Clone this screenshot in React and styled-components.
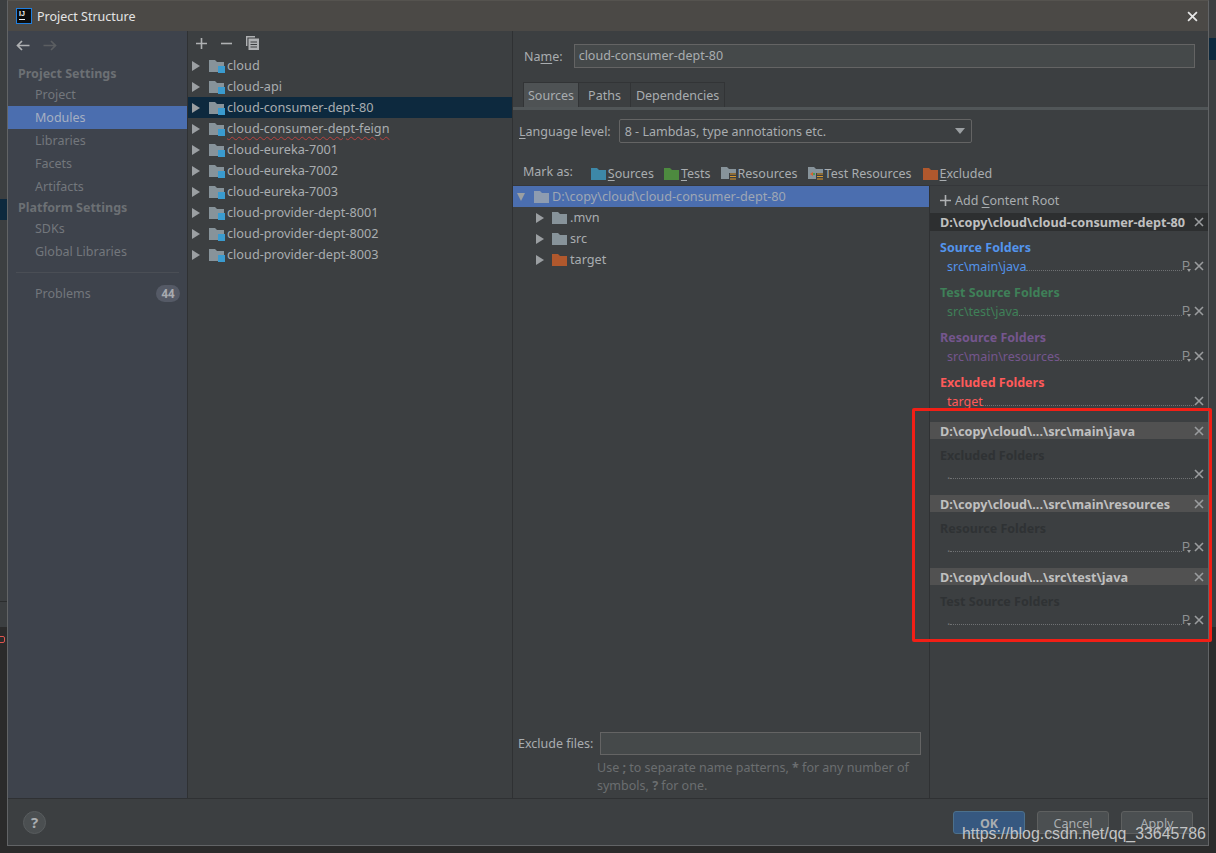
import React from "react";
import styled, { createGlobalStyle } from "styled-components";

const Global = createGlobalStyle`
  html, body { margin: 0; padding: 0; background: #2b2b2b; }
  body { width: 1216px; height: 853px; overflow: hidden; font-family: "Noto Sans", "Open Sans", sans-serif; font-size: 13px; color: #a9adb0; }
  u { text-underline-offset: 2px; text-decoration-thickness: 1px; }
`;

const Page = styled.div`
  position: relative;
  width: 1216px;
  height: 853px;
  display: grid;
  grid-template-columns: 7px 1202px 7px;
  background: #2b2b2b;
`;
const LeftStrip = styled.div`
  position: relative;
  height: 853px;
  background: linear-gradient(#3c3f41 0 199px, #0d293e 199px 220px, #3c3f41 220px 601px, #2b2d2e 601px 602px, #3c3f41 602px 627px, #2b2b2b 627px);
`;
const RedGlyph = styled.div`
  position: absolute;
  left: -3px;
  top: 636px;
  width: 6px;
  height: 5px;
  border: 1px solid #e0554e;
  border-radius: 2px;
`;
const RightStrip = styled.div`
  height: 853px;
  background: linear-gradient(#3c3f41 0 38px, #0d293e 38px 60px, #3c3f41 60px 627px, #2b2b2b 627px);
`;
const Dialog = styled.div`
  box-sizing: border-box;
  height: 846px;
  display: flex;
  flex-direction: column;
  border: 1px solid #626466;
  border-top: 1px solid #55534f;
  background: #3c3f41;
`;
const TitleBar = styled.div`
  height: 30px;
  flex: none;
  box-sizing: border-box;
  display: flex;
  align-items: center;
  padding: 0 10px 0 8px;
  background: #4b4946;
  color: #e4e4e4;
`;
const TitleText = styled.span`
  margin-left: 5px;
  font-size: 12.5px;
  flex: 1;
`;
const Logo = styled.span`
  box-sizing: border-box;
  width: 16px;
  height: 16px;
  border: 1px solid #1f7fe0;
  background: #0c0c0c;
  color: #f2f2f2;
  font: bold 7px/8px "Liberation Sans", sans-serif;
  padding: 1px 0 0 2px;
  display: block;
  position: relative;
`;
const LogoBar = styled.i`
  display: block;
  width: 6px;
  height: 1px;
  background: #f2f2f2;
  margin-top: 1px;
`;
const Body = styled.div`
  flex: 1;
  min-height: 0;
  display: flex;
`;
const Sidebar = styled.nav`
  width: 179px;
  flex: none;
  background: #3e434c;
  border-right: 1px solid #2f3133;
  padding-top: 2px;
`;
const NavArrows = styled.div`
  height: 25px;
  display: flex;
  align-items: center;
  gap: 13px;
  padding-left: 8px;
  margin-bottom: 6px;
`;
const SideHeader = styled.div`
  height: 19px;
  line-height: 19px;
  padding-left: 10px;
  font-weight: 700;
  font-size: 12.5px;
  color: #6c7074;
`;
const SideItem = styled.div`
  height: 23px;
  line-height: 23px;
  padding-left: 27px;
  font-size: 12.5px;
  color: ${(p) => (p.$active ? "#a6b0c2" : "#73777c")};
  background: ${(p) => (p.$active ? "#4b6eaf" : "transparent")};
  display: flex;
  justify-content: space-between;
`;
const SideRule = styled.div`
  height: 1px;
  background: #4a4e55;
  margin: 9px 8px 9px 8px;
`;
const Badge = styled.span`
  align-self: center;
  width: 24px;
  height: 17px;
  line-height: 17px;
  margin-right: 7px;
  border-radius: 9px;
  background: #555a66;
  color: #a8abb0;
  font-size: 11.5px;
  font-weight: 700;
  text-align: center;
`;
const TreePanel = styled.section`
  width: 325px;
  flex: none;
  box-sizing: border-box;
  border-right: 1px solid #2f3133;
`;
const TreeTools = styled.div`
  height: 24px;
  display: flex;
  align-items: center;
  gap: 14px;
  padding-left: 8px;
`;
const TreeRow = styled.div`
  height: 21px;
  display: flex;
  align-items: center;
  padding-left: ${(p) => p.$indent || 3}px;
  color: #a9adb0;
  font-size: 12.7px;
  background: ${(p) => (p.$selected ? "#0d293e" : p.$blue ? "#4b6eaf" : "transparent")};
`;
const TriGap = styled.span`
  flex: none;
  width: ${(p) => p.$w}px;
`;
const RowLabel = styled.span`
  margin-left: 2px;
  margin-bottom: 2px;
  white-space: nowrap;
  ${(p) => p.$error && "text-decoration: underline wavy #b8423f 1px; text-underline-offset: 3px;"}
  ${(p) => p.$muted && "color: #9fa7b4;"}
`;
const Main = styled.section`
  flex: 1;
  min-width: 0;
  display: flex;
  flex-direction: column;
`;
const NameRow = styled.div`
  height: 24px;
  display: flex;
  align-items: center;
  margin-top: 13px;
  padding-left: 11px;
  padding-right: 13px;
`;
const Label = styled.span`
  font-size: 12.5px;
  color: #a9adb0;
  white-space: nowrap;
`;
const TextBox = styled.div`
  box-sizing: border-box;
  flex: 1;
  height: ${(p) => p.$h || 24}px;
  margin-left: ${(p) => p.$ml || 11}px;
  line-height: 21px;
  padding-left: 4px;
  background: #45494a;
  border: 1px solid #646464;
  font-size: 12.5px;
  color: #a9adb0;
`;
const Tabs = styled.div`
  display: flex;
  margin-top: 14px;
  padding-left: 11px;
  height: 25px;
  border-bottom: 3px solid #515658;
`;
const Tab = styled.div`
  box-sizing: border-box;
  height: 25px;
  line-height: 25px;
  padding: 0 ${(p) => p.$pad}px;
  font-size: 12.5px;
  color: #a9adb0;
  border: 1px solid #323436;
  border-bottom: none;
  margin-left: -1px;
  background: ${(p) => (p.$active ? "#4e5254" : "transparent")};
`;
const LangRow = styled.div`
  height: 24px;
  display: flex;
  align-items: center;
  margin-top: 9px;
  padding-left: 6px;
`;
const Combo = styled.div`
  box-sizing: border-box;
  width: 353px;
  height: 24px;
  margin-left: 8px;
  padding: 0 6px 0 5px;
  display: flex;
  align-items: center;
  justify-content: space-between;
  border: 1px solid #646464;
  border-radius: 2px;
  font-size: 12.5px;
  color: #a9adb0;
`;
const MarkRow = styled.div`
  height: 43px;
  box-sizing: border-box;
  padding: 15px 0 0 10px;
  display: flex;
  align-items: center;
  border-bottom: 1px solid #35373a;
`;
const MarkItem = styled.span`
  display: inline-flex;
  align-items: center;
  gap: 1px;
  margin-left: ${(p) => p.$ml}px;
  font-size: 12.5px;
  color: #a9adb0;
  white-space: nowrap;
  padding-top: 4px;
`;
const Split = styled.div`
  flex: 1;
  min-height: 0;
  display: flex;
`;
const ContentTree = styled.div`
  width: 416px;
  flex: none;
  display: flex;
  flex-direction: column;
  border-right: 1px solid #2f3133;
`;
const Exclude = styled.div`
  margin-top: auto;
  padding: 0 8px 3px 5px;
`;
const ExcludeRow = styled.div`
  display: flex;
  align-items: flex-end;
  height: 24px;
`;
const ExcludeLabel = styled(Label)`
  align-self: center;
`;
const Hint = styled.div`
  margin: 4px 0 0 79px;
  font-size: 12.5px;
  line-height: 18px;
  color: #6b6e70;
`;
const Roots = styled.div`
  flex: 1;
  min-width: 0;
`;
const AddRow = styled.div`
  height: 27px;
  display: flex;
  align-items: center;
  gap: 4px;
  padding: 1px 0 0 10px;
  font-size: 12.5px;
  color: #a9adb0;
  box-sizing: border-box;
`;
const RootHeader = styled.div`
  height: ${(p) => (p.$dark ? 18 : 17)}px;
  display: flex;
  align-items: center;
  justify-content: space-between;
  padding: 0 4px 0 10px;
  background: ${(p) => (p.$dark ? "#2d2f30" : "#515151")};
  color: #c0c0c0;
  font-weight: 700;
  font-size: 12.65px;
  white-space: nowrap;
`;
const Section = styled.div`
  padding-bottom: 11px;
`;
const Group = styled.div`
  padding-top: 8px;
  margin-bottom: 1px;
`;
const GroupTitle = styled.div`
  height: 18px;
  line-height: 18px;
  padding-left: 10px;
  font-weight: 700;
  font-size: 12.5px;
  color: ${(p) => p.$color};
`;
const FolderRow = styled.div`
  height: 18px;
  display: flex;
  align-items: center;
  padding: 0 4px 0 17px;
  font-size: 12.5px;
  color: ${(p) => p.$color};
`;
const Leader = styled.span`
  flex: 1;
  align-self: flex-end;
  margin-bottom: 4px;
  border-bottom: 1px dotted #6f7173;
`;
const PMark = styled.span`
  position: relative;
  width: 11px;
  font: 12px/12px "Liberation Sans", sans-serif;
  color: #8f9193;
  margin-right: 1px;
`;
const PArrow = styled.i`
  position: absolute;
  left: 5px;
  bottom: 0;
  border: 2.5px solid transparent;
  border-top: 3px solid #9a9c9e;
  border-bottom: 0;
`;
const Footer = styled.footer`
  height: 47px;
  flex: none;
  box-sizing: border-box;
  border-top: 1px solid #2f3133;
  display: flex;
  align-items: center;
  padding: 0 15px 0 15px;
`;
const Help = styled.div`
  box-sizing: border-box;
  width: 23px;
  height: 23px;
  border-radius: 50%;
  background: #4b4f51;
  border: 1px solid #585c5e;
  color: #a9adb0;
  font: bold 15px/21px "Noto Sans", sans-serif;
  text-align: center;
`;
const Spacer = styled.div`
  flex: 1;
`;
const Button = styled.button`
  box-sizing: border-box;
  width: 72px;
  height: 23px;
  margin-left: 12px;
  padding: 3px 0 0;
  border-radius: 3px;
  font-family: inherit;
  font-size: 12.5px;
  font-weight: ${(p) => (p.$primary ? 700 : 400)};
  color: #a9adb0;
  background: ${(p) => (p.$primary ? "#365880" : "#4b4f51")};
  border: 1px solid ${(p) => (p.$primary ? "#4c708c" : "#5e6060")};
`;
const RedBox = styled.div`
  position: absolute;
  left: 912px;
  top: 408px;
  width: 294px;
  height: 228px;
  border: 3px solid #f21f16;
  border-radius: 2px;
`;
const Watermark = styled.div`
  position: absolute;
  left: 962px;
  top: 824px;
  font: 15.9px/20px "Liberation Sans", sans-serif;
  color: #c3c4c5;
  white-space: nowrap;
`;

const Folder = ({ color = "#87939a", module, size = 15 }) => (
  <svg width={size + 1} height="14" viewBox="0 0 16 14" style={{ flex: "none" }}>
    <path d="M0 1h6l2 2h7v10H0z" fill={color} />
    {module && <rect x="9" y="7" width="7" height="7" fill="#3a9bcf" />}
  </svg>
);
const LinesFolder = ({ test }) => (
  <svg width="16" height="15" viewBox="0 0 16 15" style={{ flex: "none" }}>
    <path d="M0 1h6l2 2h7v10H0z" fill="#87939a" />
    <rect x="8" y="7" width="8" height="8" fill="#3c3f41" />
    <path d="M9 8h6M9 10.5h6M9 13h6" stroke="#d9982e" strokeWidth="1.2" />
    {test && <path d="M2 8l3-2v4z" fill="#d9622e" />}
    {test && <rect x="5" y="7" width="2" height="2" fill="#499c54" />}
  </svg>
);
const Tri = ({ down, color = "#9b9fa2" }) => (
  <svg width="10" height="10" viewBox="0 0 10 10" style={{ flex: "none" }}>
    <path d={down ? "M1 1h8L5 9z" : "M1 0l8 5-8 5z"} fill={color} />
  </svg>
);
const Caret = () => (
  <svg width="10" height="6" viewBox="0 0 10 6" style={{ flex: "none" }}>
    <path d="M0 0h10L5 6z" fill="#9b9fa2" />
  </svg>
);
const Cross = ({ color = "#9a9c9e", size = 10 }) => (
  <svg width={size} height={size} viewBox="0 0 10 10" style={{ flex: "none" }}>
    <path d="M1 1l8 8M9 1l-8 8" stroke={color} strokeWidth="1.6" />
  </svg>
);
const Plus = ({ color = "#afb1b3", size = 11 }) => (
  <svg width={size} height={size} viewBox="0 0 11 11" style={{ flex: "none" }}>
    <path d="M5.5 0v11M0 5.5h11" stroke={color} strokeWidth="1.6" />
  </svg>
);
const Minus = () => (
  <svg width="11" height="11" viewBox="0 0 11 11" style={{ flex: "none" }}>
    <path d="M0 5.5h11" stroke="#afb1b3" strokeWidth="1.6" />
  </svg>
);
const Copy = () => (
  <svg width="13" height="14" viewBox="0 0 13 14" style={{ flex: "none" }}>
    <path d="M0.7 10V.7H9" fill="none" stroke="#afb1b3" strokeWidth="1.4" />
    <rect x="2.5" y="2.5" width="10.5" height="11.5" fill="#afb1b3" />
    <path d="M4.5 6h6.5M4.5 8.5h6.5M4.5 11h6.5" stroke="#3c3f41" strokeWidth="1" />
  </svg>
);
const Arrow = ({ color, flip }) => (
  <svg width="14" height="11" viewBox="0 0 14 11" style={{ flex: "none", transform: flip ? "scaleX(-1)" : "none" }}>
    <path d="M13.5 5.5H2M6 1L1.5 5.5 6 10" fill="none" stroke={color} strokeWidth="1.7" />
  </svg>
);

const modules = [
  "cloud",
  "cloud-api",
  "cloud-consumer-dept-80",
  "cloud-consumer-dept-feign",
  "cloud-eureka-7001",
  "cloud-eureka-7002",
  "cloud-eureka-7003",
  "cloud-provider-dept-8001",
  "cloud-provider-dept-8002",
  "cloud-provider-dept-8003",
];

const BLUE = "#5394ec";
const GREEN = "#3f8058";
const PURPLE = "#75568e";
const RED = "#ff5a5a";
const DIM = "#2f3234";

const Leaderline = ({ text, color, pkg = true }) => (
  <FolderRow $color={color}>
    {text}
    <Leader />
    {pkg && (
      <PMark>
        P
        <PArrow />
      </PMark>
    )}
    <Cross />
  </FolderRow>
);

const Block = ({ title, color, text, textColor, pkg }) => (
  <Group>
    <GroupTitle $color={color}>{title}</GroupTitle>
    <Leaderline text={text} color={textColor || color} pkg={pkg} />
  </Group>
);

const RootBlock = ({ path, dark, children }) => (
  <Section>
    <RootHeader $dark={dark}>
      {path}
      <Cross />
    </RootHeader>
    {children}
  </Section>
);

export default function App() {
  return (
    <Page>
      <Global />
      <LeftStrip>
        <RedGlyph />
      </LeftStrip>
      <Dialog>
        <TitleBar>
          <Logo>
            IJ
            <LogoBar />
          </Logo>
          <TitleText>Project Structure</TitleText>
          <Cross color="#e6e6e6" size={11} />
        </TitleBar>
        <Body>
          <Sidebar>
            <NavArrows>
              <Arrow color="#afb1b3" />
              <Arrow color="#5b5e61" flip />
            </NavArrows>
            <SideHeader>Project Settings</SideHeader>
            <SideItem>Project</SideItem>
            <SideItem $active>Modules</SideItem>
            <SideItem>Libraries</SideItem>
            <SideItem>Facets</SideItem>
            <SideItem>Artifacts</SideItem>
            <SideHeader>Platform Settings</SideHeader>
            <SideItem>SDKs</SideItem>
            <SideItem>Global Libraries</SideItem>
            <SideRule />
            <SideItem>
              Problems
              <Badge>44</Badge>
            </SideItem>
          </Sidebar>
          <TreePanel>
            <TreeTools>
              <Plus />
              <Minus />
              <Copy />
            </TreeTools>
            {modules.map((m, i) => (
              <TreeRow key={m} $selected={i === 2}>
                <Tri />
                <TriGap $w={8} />
                <Folder module />
                <RowLabel $error={i === 3}>{m}</RowLabel>
              </TreeRow>
            ))}
          </TreePanel>
          <Main>
            <NameRow>
              <Label>
                Na<u>m</u>e:
              </Label>
              <TextBox>cloud-consumer-dept-80</TextBox>
            </NameRow>
            <Tabs>
              <Tab $active $pad={4}>Sources</Tab>
              <Tab $pad={9}>Paths</Tab>
              <Tab $pad={5}>Dependencies</Tab>
            </Tabs>
            <LangRow>
              <Label>
                <u>L</u>anguage level:
              </Label>
              <Combo>
                8 - Lambdas, type annotations etc.
                <Caret />
              </Combo>
            </LangRow>
            <MarkRow>
              <Label>Mark as:</Label>
              <MarkItem $ml={18}>
                <Folder color="#3d88a8" />
                <span>
                  <u>S</u>ources
                </span>
              </MarkItem>
              <MarkItem $ml={10}>
                <Folder color="#4d8a3f" />
                <span>
                  <u>T</u>ests
                </span>
              </MarkItem>
              <MarkItem $ml={10}>
                <LinesFolder />
                Resources
              </MarkItem>
              <MarkItem $ml={10}>
                <LinesFolder test />
                Test Resources
              </MarkItem>
              <MarkItem $ml={11}>
                <Folder color="#b0582d" />
                <span>
                  <u>E</u>xcluded
                </span>
              </MarkItem>
            </MarkRow>
            <Split>
              <ContentTree>
                <TreeRow $blue $indent={3}>
                  <Tri down />
                  <TriGap $w={8} />
                  <Folder color="#8e9cb0" />
                  <RowLabel $muted>D:\copy\cloud\cloud-consumer-dept-80</RowLabel>
                </TreeRow>
                <TreeRow $indent={22}>
                  <Tri />
                  <TriGap $w={7} />
                  <Folder />
                  <RowLabel>.mvn</RowLabel>
                </TreeRow>
                <TreeRow $indent={22}>
                  <Tri />
                  <TriGap $w={7} />
                  <Folder />
                  <RowLabel>src</RowLabel>
                </TreeRow>
                <TreeRow $indent={22}>
                  <Tri />
                  <TriGap $w={7} />
                  <Folder color="#b0582d" />
                  <RowLabel>target</RowLabel>
                </TreeRow>
                <Exclude>
                  <ExcludeRow>
                    <ExcludeLabel>Exclude files:</ExcludeLabel>
                    <TextBox $ml={7} $h={23} />
                  </ExcludeRow>
                  <Hint>
                    Use <b>;</b> to separate name patterns, <b>*</b> for any number of symbols, <b>?</b> for one.
                  </Hint>
                </Exclude>
              </ContentTree>
              <Roots>
                <AddRow>
                  <Plus />
                  <span>
                    Add <u>C</u>ontent Root
                  </span>
                </AddRow>
                <RootBlock dark path="D:\copy\cloud\cloud-consumer-dept-80">
                  <Block title="Source Folders" color={BLUE} text="src\main\java" pkg />
                  <Block title="Test Source Folders" color={GREEN} text="src\test\java" pkg />
                  <Block title="Resource Folders" color={PURPLE} text="src\main\resources" pkg />
                  <Block title="Excluded Folders" color={RED} text="target" pkg={false} />
                </RootBlock>
                <RootBlock path="D:\copy\cloud\...\src\main\java">
                  <Block title="Excluded Folders" color={DIM} text="." textColor="#6f7173" pkg={false} />
                </RootBlock>
                <RootBlock path="D:\copy\cloud\...\src\main\resources">
                  <Block title="Resource Folders" color={DIM} text="." textColor="#6f7173" pkg />
                </RootBlock>
                <RootBlock path="D:\copy\cloud\...\src\test\java">
                  <Block title="Test Source Folders" color={DIM} text="." textColor="#6f7173" pkg />
                </RootBlock>
              </Roots>
            </Split>
          </Main>
        </Body>
        <Footer>
          <Help>?</Help>
          <Spacer />
          <Button $primary>OK</Button>
          <Button>Cancel</Button>
          <Button>Apply</Button>
        </Footer>
      </Dialog>
      <RightStrip />
      <RedBox />
      <Watermark>https://blog.csdn.net/qq_33645786</Watermark>
    </Page>
  );
}
